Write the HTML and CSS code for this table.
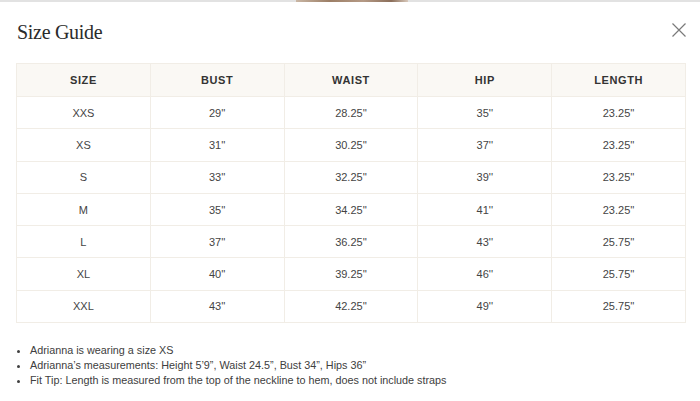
FILE: index.html
```html
<!DOCTYPE html>
<html>
<head>
<meta charset="utf-8">
<link rel="stylesheet" href="styles.css">
</head>
<body>
<div class="topstrip"><div class="photo"></div></div>
<div class="modal">
  <div class="head">
    <h2 class="title">Size Guide</h2>
    <button class="close" aria-label="Close">
      <svg width="14" height="14" viewBox="0 0 14 14"><path d="M0.5 0.5 L13.5 13.5 M13.5 0.5 L0.5 13.5" stroke="#7a7a7a" stroke-width="1.2" fill="none"/></svg>
    </button>
  </div>
  <table class="sizes">
    <thead>
      <tr><th>SIZE</th><th>BUST</th><th>WAIST</th><th>HIP</th><th>LENGTH</th></tr>
    </thead>
    <tbody>
      <tr><td>XXS</td><td>29''</td><td>28.25''</td><td>35''</td><td>23.25''</td></tr>
      <tr><td>XS</td><td>31''</td><td>30.25''</td><td>37''</td><td>23.25''</td></tr>
      <tr><td>S</td><td>33''</td><td>32.25''</td><td>39''</td><td>23.25''</td></tr>
      <tr><td>M</td><td>35''</td><td>34.25''</td><td>41''</td><td>23.25''</td></tr>
      <tr><td>L</td><td>37''</td><td>36.25''</td><td>43''</td><td>25.75''</td></tr>
      <tr><td>XL</td><td>40''</td><td>39.25''</td><td>46''</td><td>25.75''</td></tr>
      <tr><td>XXL</td><td>43''</td><td>42.25''</td><td>49''</td><td>25.75''</td></tr>
    </tbody>
  </table>
  <ul class="notes">
    <li>Adrianna is wearing a size XS</li>
    <li>Adrianna’s measurements: Height 5’9”, Waist 24.5”, Bust 34”, Hips 36”</li>
    <li>Fit Tip: Length is measured from the top of the neckline to hem, does not include straps</li>
  </ul>
</div>
</body>
</html>
```
FILE: styles.css
```css
html, body {
  margin: 0;
  padding: 0;
  background: #ffffff;
}
.topstrip {
  height: 2px;
  background: #e2e2e2;
  display: flex;
  justify-content: center;
}
.photo {
  width: 112px;
  height: 2px;
  margin-left: 4px;
  background: linear-gradient(90deg, #c9b6a4, #9c7e66 30%, #b59a86 60%, #8b6e5a 85%, #d8c8ba);
}
.modal {
  padding: 18px 14px 0 16px;
}
.head {
  display: flex;
  justify-content: space-between;
  align-items: flex-start;
  height: 24px;
}
.title {
  margin: 0 0 0 1px;
  font-family: "Liberation Serif", "DejaVu Serif", serif;
  font-weight: 400;
  font-size: 20px;
  line-height: 24px;
  letter-spacing: -0.3px;
  color: #2b2b2b;
}
.close {
  border: 0;
  background: none;
  padding: 0;
  margin-top: 3px;
  width: 14px;
  height: 14px;
  display: block;
}
.close svg { display: block; }
.sizes {
  margin-top: 19px;
  width: 670px;
  border-collapse: collapse;
  table-layout: fixed;
  font-family: "Liberation Sans", Arial, sans-serif;
}
.sizes th, .sizes td {
  border: 1px solid #f1ede6;
  text-align: center;
  padding: 0;
}
.sizes th {
  background: #faf8f4;
  height: 32px;
  font-size: 11px;
  font-weight: 700;
  letter-spacing: 0.6px;
  color: #333333;
}
.sizes td {
  height: 31.3px;
  font-size: 11px;
  color: #444444;
}
.notes {
  margin: 20px 0 0 0;
  padding-left: 14px;
  font-family: "Liberation Sans", Arial, sans-serif;
  font-size: 10.8px;
  line-height: 15px;
  color: #404040;
}
.notes li {
  height: 15px;
}
```
